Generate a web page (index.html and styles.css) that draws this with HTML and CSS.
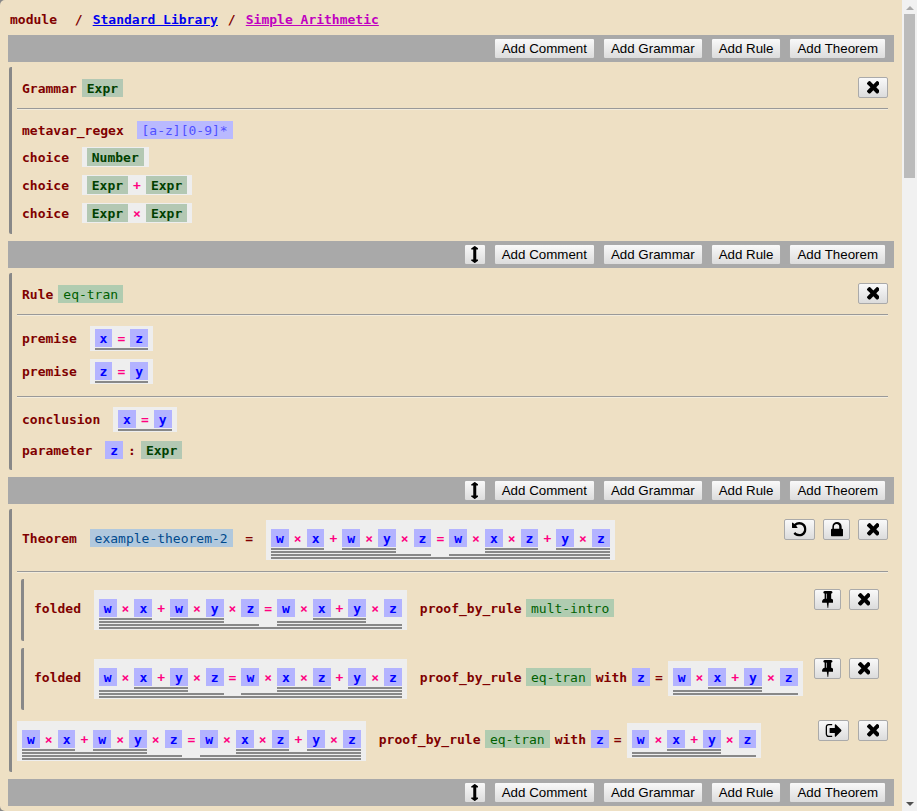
FILE: index.html
```html
<!DOCTYPE html>
<html lang="en">
<head>
    <meta charset="UTF-8">
    <meta name="viewport" content="width=device-width, initial-scale=1.0">
    <title>Simple Arithmetic</title>
    <link rel="stylesheet" href="styles.css">
</head>
<body>
    <svg class="defs" aria-hidden="true">
        <symbol id="i-times" viewBox="110 366 1188 1188"><path d="M1298 1322q0 40-28 68l-136 136q-28 28-68 28t-68-28l-294-294-294 294q-28 28-68 28t-68-28l-136-136q-28-28-28-68t28-68l294-294-294-294q-28-28-28-68t28-68l136-136q28-28 68-28t68 28l294 294 294-294q28-28 68-28t68 28l136 136q28 28 28 68t-28 68l-294 294 294 294q28 28 28 68z"/></symbol>
        <symbol id="i-undo" viewBox="128 128 1536 1536"><path d="M1664 896q0 156-61 298t-164 245-245 164-298 61q-172 0-327-72.5t-264-204.5q-7-10-6.5-22.5t8.5-20.5l137-138q10-9 25-9 16 2 23 12 73 95 179 147t225 52q104 0 198.5-40.5t163.5-109.5 109.5-163.5 40.5-198.5-40.5-198.5-109.5-163.5-163.5-109.5-198.5-40.5q-98 0-188 35.5t-160 101.5l137 138q31 30 14 69-17 40-59 40h-448q-26 0-45-19t-19-45v-448q0-42 40-59 39-17 69 14l130 129q107-101 244.5-156.5t284.5-55.5q156 0 298 61t245 164 164 245 61 298z"/></symbol>
        <symbol id="i-lock" viewBox="304 128 1152 1408"><path d="M520 768h576v-192q0-106-75-181t-181-75-181 75-75 181v192zm936 96v576q0 40-28 68t-68 28h-960q-40 0-68-28t-28-68v-576q0-40 28-68t68-28h32v-192q0-184 132-316t316-132 316 132 132 316v192h32q40 0 68 28t28 68z"/></symbol>
        <symbol id="i-pin" viewBox="0 128 1152 1664"><path d="M480 864v-448q0-14-9-23t-23-9-23 9-9 23v448q0 14 9 23t23 9 23-9 9-23zm672 352q0 26-19 45t-45 19h-429l-51 483q-2 12-10.5 20.5t-20.5 8.5h-1q-27 0-32-27l-76-485h-404q-26 0-45-19t-19-45q0-123 78.5-221.5t177.5-98.5v-512q-52 0-90-38t-38-90 38-90 90-38h640q52 0 90 38t38 90-38 90-90 38v512q99 0 177.5 98.5t78.5 221.5z"/></symbol>
        <symbol id="i-out" viewBox="0 256 1632 1280"><path d="M704 1440q0 4 1 20t.5 26.5-3 23.5-10 19.5-20.5 6.5h-320q-119 0-203.5-84.5t-84.5-203.5v-704q0-119 84.5-203.5t203.5-84.5h320q13 0 22.5 9.5t9.5 22.5q0 4 1 20t.5 26.5-3 23.5-10 19.5-20.5 6.5h-320q-66 0-113 47t-47 113v704q0 66 47 113t113 47h312l11.5 1 11.5 3 8 5.5 7 9 2 13.5zm928-544q0 26-19 45l-544 544q-19 19-45 19t-45-19-19-45v-288h-448q-26 0-45-19t-19-45v-384q0-26 19-45t45-19h448v-288q0-26 19-45t45-19 45 19l544 544q19 19 19 45z"/></symbol>
        <symbol id="i-move" viewBox="96 -64 640 1920" preserveAspectRatio="none"><path d="M736 256q0 26-19 45t-45 19h-128v1152h128q26 0 45 19t19 45-19 45l-256 256q-19 19-45 19t-45-19l-256-256q-19-19-19-45t19-45 45-19h128v-1152h-128q-26 0-45-19t-19-45 19-45l256-256q19-19 45-19t45 19l256 256q19 19 19 45z"/></symbol>
    </svg>

    <div class="main">
        <div class="page">
            <div class="crumbs">module  <span class="slash">/</span> <a class="crumb" href="#lib">Standard Library</a> <span class="slash">/</span> <a class="crumb seen" href="#arith">Simple Arithmetic</a></div>

            <div class="bar">
                <button class="btn">Add Comment</button>
                <button class="btn">Add Grammar</button>
                <button class="btn">Add Rule</button>
                <button class="btn">Add Theorem</button>
            </div>

            <!-- Grammar -->
            <div class="block">
                <div class="head">
                    <div class="line">
                        <span class="kw">Grammar</span><span class="sort near">Expr</span>
                    </div>
                    <div class="tools">
                        <button class="btn icon"><svg class="ic-times"><use href="#i-times"/></svg></button>
                    </div>
                </div>
                <hr class="sep">
                <div class="row tight"><span class="kw lead">metavar_regex</span><span class="regex">[a-z][0-9]*</span></div>
                <div class="row"><span class="kw lead">choice</span><span class="expr"><span class="sort in">Number</span></span></div>
                <div class="row"><span class="kw lead">choice</span><span class="expr"><span class="sort in">Expr</span><span class="o">+</span><span class="sort in">Expr</span></span></div>
                <div class="row tail"><span class="kw lead">choice</span><span class="expr"><span class="sort in">Expr</span><span class="o">×</span><span class="sort in">Expr</span></span></div>
            </div>

            <div class="bar">
                <button class="btn icon move"><svg class="ic-move"><use href="#i-move"/></svg></button>
                <button class="btn">Add Comment</button>
                <button class="btn">Add Grammar</button>
                <button class="btn">Add Rule</button>
                <button class="btn">Add Theorem</button>
            </div>

            <!-- Rule -->
            <div class="block">
                <div class="head">
                    <div class="line">
                        <span class="kw">Rule</span><span class="rule near">eq-tran</span>
                    </div>
                    <div class="tools">
                        <button class="btn icon"><svg class="ic-times"><use href="#i-times"/></svg></button>
                    </div>
                </div>
                <hr class="sep">
                <div class="row"><span class="kw lead">premise</span><span class="expr"><span class="t"><span class="v">x</span><span class="o">=</span><span class="v">z</span></span></span></div>
                <div class="row last"><span class="kw lead">premise</span><span class="expr"><span class="t"><span class="v">z</span><span class="o">=</span><span class="v">y</span></span></span></div>
                <hr class="sep mid">
                <div class="row"><span class="kw lead">conclusion</span><span class="expr"><span class="t"><span class="v">x</span><span class="o">=</span><span class="v">y</span></span></span></div>
                <div class="row last"><span class="kw lead">parameter</span><span class="v out">z</span><span class="o kw">:</span><span class="sort">Expr</span></div>
            </div>

            <div class="bar">
                <button class="btn icon move"><svg class="ic-move"><use href="#i-move"/></svg></button>
                <button class="btn">Add Comment</button>
                <button class="btn">Add Grammar</button>
                <button class="btn">Add Rule</button>
                <button class="btn">Add Theorem</button>
            </div>

            <!-- Theorem -->
            <div class="block">
                <div class="head">
                    <div class="line boxed">
                        <span class="kw lead">Theorem</span><span class="thm">example-theorem-2</span><span class="kw eq">=</span>
                        <span class="expr">
                            <span class="t">
                                <span class="t"><span class="t"><span class="t"><span class="v">w</span><span class="o">×</span><span class="v">x</span></span><span class="o">+</span><span class="t"><span class="v">w</span><span class="o">×</span><span class="v">y</span></span></span><span class="o">×</span><span class="v">z</span></span>
                                <span class="o">=</span>
                                <span class="t"><span class="v">w</span><span class="o">×</span><span class="t"><span class="t"><span class="v">x</span><span class="o">×</span><span class="v">z</span></span><span class="o">+</span><span class="t"><span class="v">y</span><span class="o">×</span><span class="v">z</span></span></span></span>
                            </span>
                        </span>
                    </div>
                    <div class="tools">
                        <button class="btn icon wide"><svg class="ic-undo"><use href="#i-undo"/></svg></button>
                        <button class="btn icon narrow"><svg class="ic-lock"><use href="#i-lock"/></svg></button>
                        <button class="btn icon"><svg class="ic-times"><use href="#i-times"/></svg></button>
                    </div>
                </div>
                <hr class="sep thin">

                <div class="step">
                    <div class="head">
                        <div class="line boxed">
                            <span class="kw lead">folded</span>
                            <span class="expr">
                                <span class="t">
                                    <span class="t"><span class="t"><span class="t"><span class="v">w</span><span class="o">×</span><span class="v">x</span></span><span class="o">+</span><span class="t"><span class="v">w</span><span class="o">×</span><span class="v">y</span></span></span><span class="o">×</span><span class="v">z</span></span>
                                    <span class="o">=</span>
                                    <span class="t"><span class="t"><span class="v">w</span><span class="o">×</span><span class="t"><span class="v">x</span><span class="o">+</span><span class="v">y</span></span></span><span class="o">×</span><span class="v">z</span></span>
                                </span>
                            </span>
                            <span class="kw lead after">proof_by_rule</span><span class="rule">mult-intro</span>
                        </div>
                        <div class="tools">
                            <button class="btn icon narrow"><svg class="ic-pin"><use href="#i-pin"/></svg></button>
                            <button class="btn icon"><svg class="ic-times"><use href="#i-times"/></svg></button>
                        </div>
                    </div>
                </div>

                <div class="step">
                    <div class="head">
                        <div class="line boxed">
                            <span class="kw lead">folded</span>
                            <span class="expr">
                                <span class="t">
                                    <span class="t"><span class="t"><span class="v">w</span><span class="o">×</span><span class="t"><span class="v">x</span><span class="o">+</span><span class="v">y</span></span></span><span class="o">×</span><span class="v">z</span></span>
                                    <span class="o">=</span>
                                    <span class="t"><span class="v">w</span><span class="o">×</span><span class="t"><span class="t"><span class="v">x</span><span class="o">×</span><span class="v">z</span></span><span class="o">+</span><span class="t"><span class="v">y</span><span class="o">×</span><span class="v">z</span></span></span></span>
                                </span>
                            </span>
                            <span class="kw lead after">proof_by_rule</span><span class="rule">eq-tran</span><span class="kw with">with</span><span class="v with">z</span><span class="o kw">=</span>
                            <span class="expr">
                                <span class="t"><span class="t"><span class="v">w</span><span class="o">×</span><span class="t"><span class="v">x</span><span class="o">+</span><span class="v">y</span></span></span><span class="o">×</span><span class="v">z</span></span>
                            </span>
                        </div>
                        <div class="tools">
                            <button class="btn icon narrow"><svg class="ic-pin"><use href="#i-pin"/></svg></button>
                            <button class="btn icon"><svg class="ic-times"><use href="#i-times"/></svg></button>
                        </div>
                    </div>
                </div>

                <div class="head final">
                    <div class="line boxed">
                        <span class="expr">
                            <span class="t">
                                <span class="t"><span class="t"><span class="t"><span class="v">w</span><span class="o">×</span><span class="v">x</span></span><span class="o">+</span><span class="t"><span class="v">w</span><span class="o">×</span><span class="v">y</span></span></span><span class="o">×</span><span class="v">z</span></span>
                                <span class="o">=</span>
                                <span class="t"><span class="v">w</span><span class="o">×</span><span class="t"><span class="t"><span class="v">x</span><span class="o">×</span><span class="v">z</span></span><span class="o">+</span><span class="t"><span class="v">y</span><span class="o">×</span><span class="v">z</span></span></span></span>
                            </span>
                        </span>
                        <span class="kw lead after">proof_by_rule</span><span class="rule">eq-tran</span><span class="kw with">with</span><span class="v with">z</span><span class="o kw">=</span>
                        <span class="expr">
                            <span class="t"><span class="t"><span class="v">w</span><span class="o">×</span><span class="t"><span class="v">x</span><span class="o">+</span><span class="v">y</span></span></span><span class="o">×</span><span class="v">z</span></span>
                        </span>
                    </div>
                    <div class="tools">
                        <button class="btn icon wide"><svg class="ic-out"><use href="#i-out"/></svg></button>
                        <button class="btn icon"><svg class="ic-times"><use href="#i-times"/></svg></button>
                    </div>
                </div>
            </div>

            <div class="bar">
                <button class="btn icon move"><svg class="ic-move"><use href="#i-move"/></svg></button>
                <button class="btn">Add Comment</button>
                <button class="btn">Add Grammar</button>
                <button class="btn">Add Rule</button>
                <button class="btn">Add Theorem</button>
            </div>
        </div>
    </div>

    <div class="scrollbar">
        <div class="arrow up"></div>
        <div class="thumb"></div>
        <div class="arrow down"></div>
    </div>
</body>
</html>
```

FILE: styles.css
```css
* {
  margin: 0;
  padding: 0;
  box-sizing: border-box;
}

html, body {
    height: 811px;
    overflow: hidden;
}

body {
    display: flex;
    font-family: "DejaVu Sans Mono", monospace;
    font-size: 13px;
    line-height: 16px;
}

.defs {
    position: absolute;
    width: 0;
    height: 0;
}

.main {
    flex: 1;
    background-color: #888;
    overflow: hidden;
}

.page {
    height: 811px;
    padding: 12px 8px 0;
    background-color: #eee0c4;
    border-radius: 5px 0 0 5px;
    overflow: hidden;
}

/* breadcrumb line */
.crumbs {
    height: 23px;
    padding-left: 2px;
    white-space: pre;
    font-weight: bold;
    color: #800000;
}

.slash {
    margin-left: 2px;
}

.crumb {
    margin-left: 2.4px;
    color: #0000ee;
}

.crumb.seen {
    color: #c000c0;
}

/* grey insert bars */
.bar {
    display: flex;
    justify-content: flex-end;
    gap: 8px;
    height: 27px;
    padding: 3px 8px 3px 0;
    background-color: #a9a9a9;
}

.btn {
    display: flex;
    align-items: center;
    justify-content: center;
    height: 21px;
    padding: 0 7px;
    font-family: "Liberation Sans", Arial, sans-serif;
    font-size: 13.33px;
    color: #000;
    background: linear-gradient(#f9f9f9, #dcdcdc);
    border: 1px solid #aaa;
    border-radius: 2px;
}

.btn svg {
    display: block;
    fill: #000;
}

.btn.icon {
    width: 30px;
    padding: 0;
}

.btn.narrow {
    width: 27px;
}

.btn.wide {
    width: 31px;
}

.btn.move {
    width: 22px;
}

.ic-times { width: 12.7px; height: 12.7px; }
.ic-undo { width: 14.5px; height: 14.5px; }
.ic-lock { width: 12px; height: 14.6px; }
.ic-pin { width: 11.8px; height: 17px; }
.ic-out { width: 16.7px; height: 13px; }
.ic-move { width: 7.5px; height: 17px; }

/* grammar, rule and theorem blocks */
.block {
    margin: 5px 6px 7px 1px;
    padding: 0 0 10px 5px;
    border-left: 3px solid #888;
    border-radius: 2px;
}

.head {
    display: flex;
    justify-content: space-between;
    align-items: flex-start;
    padding: 10px 0;
}

.line {
    display: flex;
    align-items: baseline;
    padding: 1px 0 0 5px;
}

.line.boxed {
    padding-bottom: 1px;
}

.tools {
    display: flex;
    gap: 8px;
}

.sep {
    height: 2px;
    margin-bottom: 10px;
    border: 0;
    border-top: 1px solid #999;
    border-bottom: 1px solid #f3ecdc;
}

.sep.mid {
    margin: 12px 0 9px;
}

.sep.thin {
    margin-bottom: 6px;
}

.row {
    display: flex;
    align-items: baseline;
    margin: 0 0 8px 5px;
}

.row.tight {
    margin-bottom: 7px;
}

.row.tail {
    margin-bottom: 1px;
}

.row.last {
    margin-bottom: 0;
}

.step {
    margin: 0 9px 0 4px;
    padding-left: 3px;
    border-left: 3px solid #888;
    border-radius: 2px;
}

.step + .step {
    margin-top: 7px;
}

.step .line {
    padding-left: 7px;
}

.head.final {
    padding-bottom: 0;
}

.head.final .line {
    padding-left: 0;
}

.head.final .tools {
    gap: 9px;
}

/* text pieces */
.kw {
    font-weight: bold;
    color: #800000;
}

.lead {
    margin-right: 12.8px;
}

.lead.after {
    margin-left: 13px;
    margin-right: 4.4px;
}

.eq {
    margin-right: 13px;
    margin-left: 12.5px;
}

/* chips are 18px tall, the text sits low in them */
.sort, .rule, .thm, .regex, .v {
    padding: 2px 5px 0;
    margin: 1px 0;
}

.sort {
    font-weight: bold;
    color: #004000;
    background-color: #b3c8b3;
}

.rule {
    color: #006000;
    background-color: #b0ccb0;
}

.thm {
    color: #004a8c;
    background-color: #b0c8dd;
}

.regex {
    color: #5050ff;
    background-color: #b9b9ff;
}

.near {
    margin-left: 5px;
}

.in, .t .v, .expr .v {
    margin: 0;
}

.v {
    font-weight: bold;
    color: #0000ff;
    background-color: #b3b3ff;
}

.with, .v.with {
    margin-left: 5px;
}

.o {
    padding: 0 5px;
    font-weight: bold;
    color: #ff0080;
}

.o.kw {
    color: #800000;
}

/* expression box and the nested underlines */
.expr {
    display: inline-flex;
    align-items: baseline;
    padding: 1px 5px;
    background-color: #eee;
}

.t {
    display: inline-flex;
    align-items: baseline;
    padding: 2px 0 1px;
    border-bottom: 2px solid #888;
}

/* scrollbar drawn as part of the picture */
.scrollbar {
    display: flex;
    flex-direction: column;
    align-items: center;
    flex: none;
    width: 15px;
    height: 811px;
    padding: 6px 0 5px;
    background-color: #f1f1f1;
}

.thumb {
    width: 11px;
    height: 164px;
    margin-top: 4px;
    background-color: #bbb;
}

.arrow {
    width: 0;
    height: 0;
    border-left: 4px solid transparent;
    border-right: 4px solid transparent;
}

.arrow.up {
    border-bottom: 4px solid #aaa;
}

.arrow.down {
    margin-top: auto;
    border-top: 4px solid #505050;
}
```
